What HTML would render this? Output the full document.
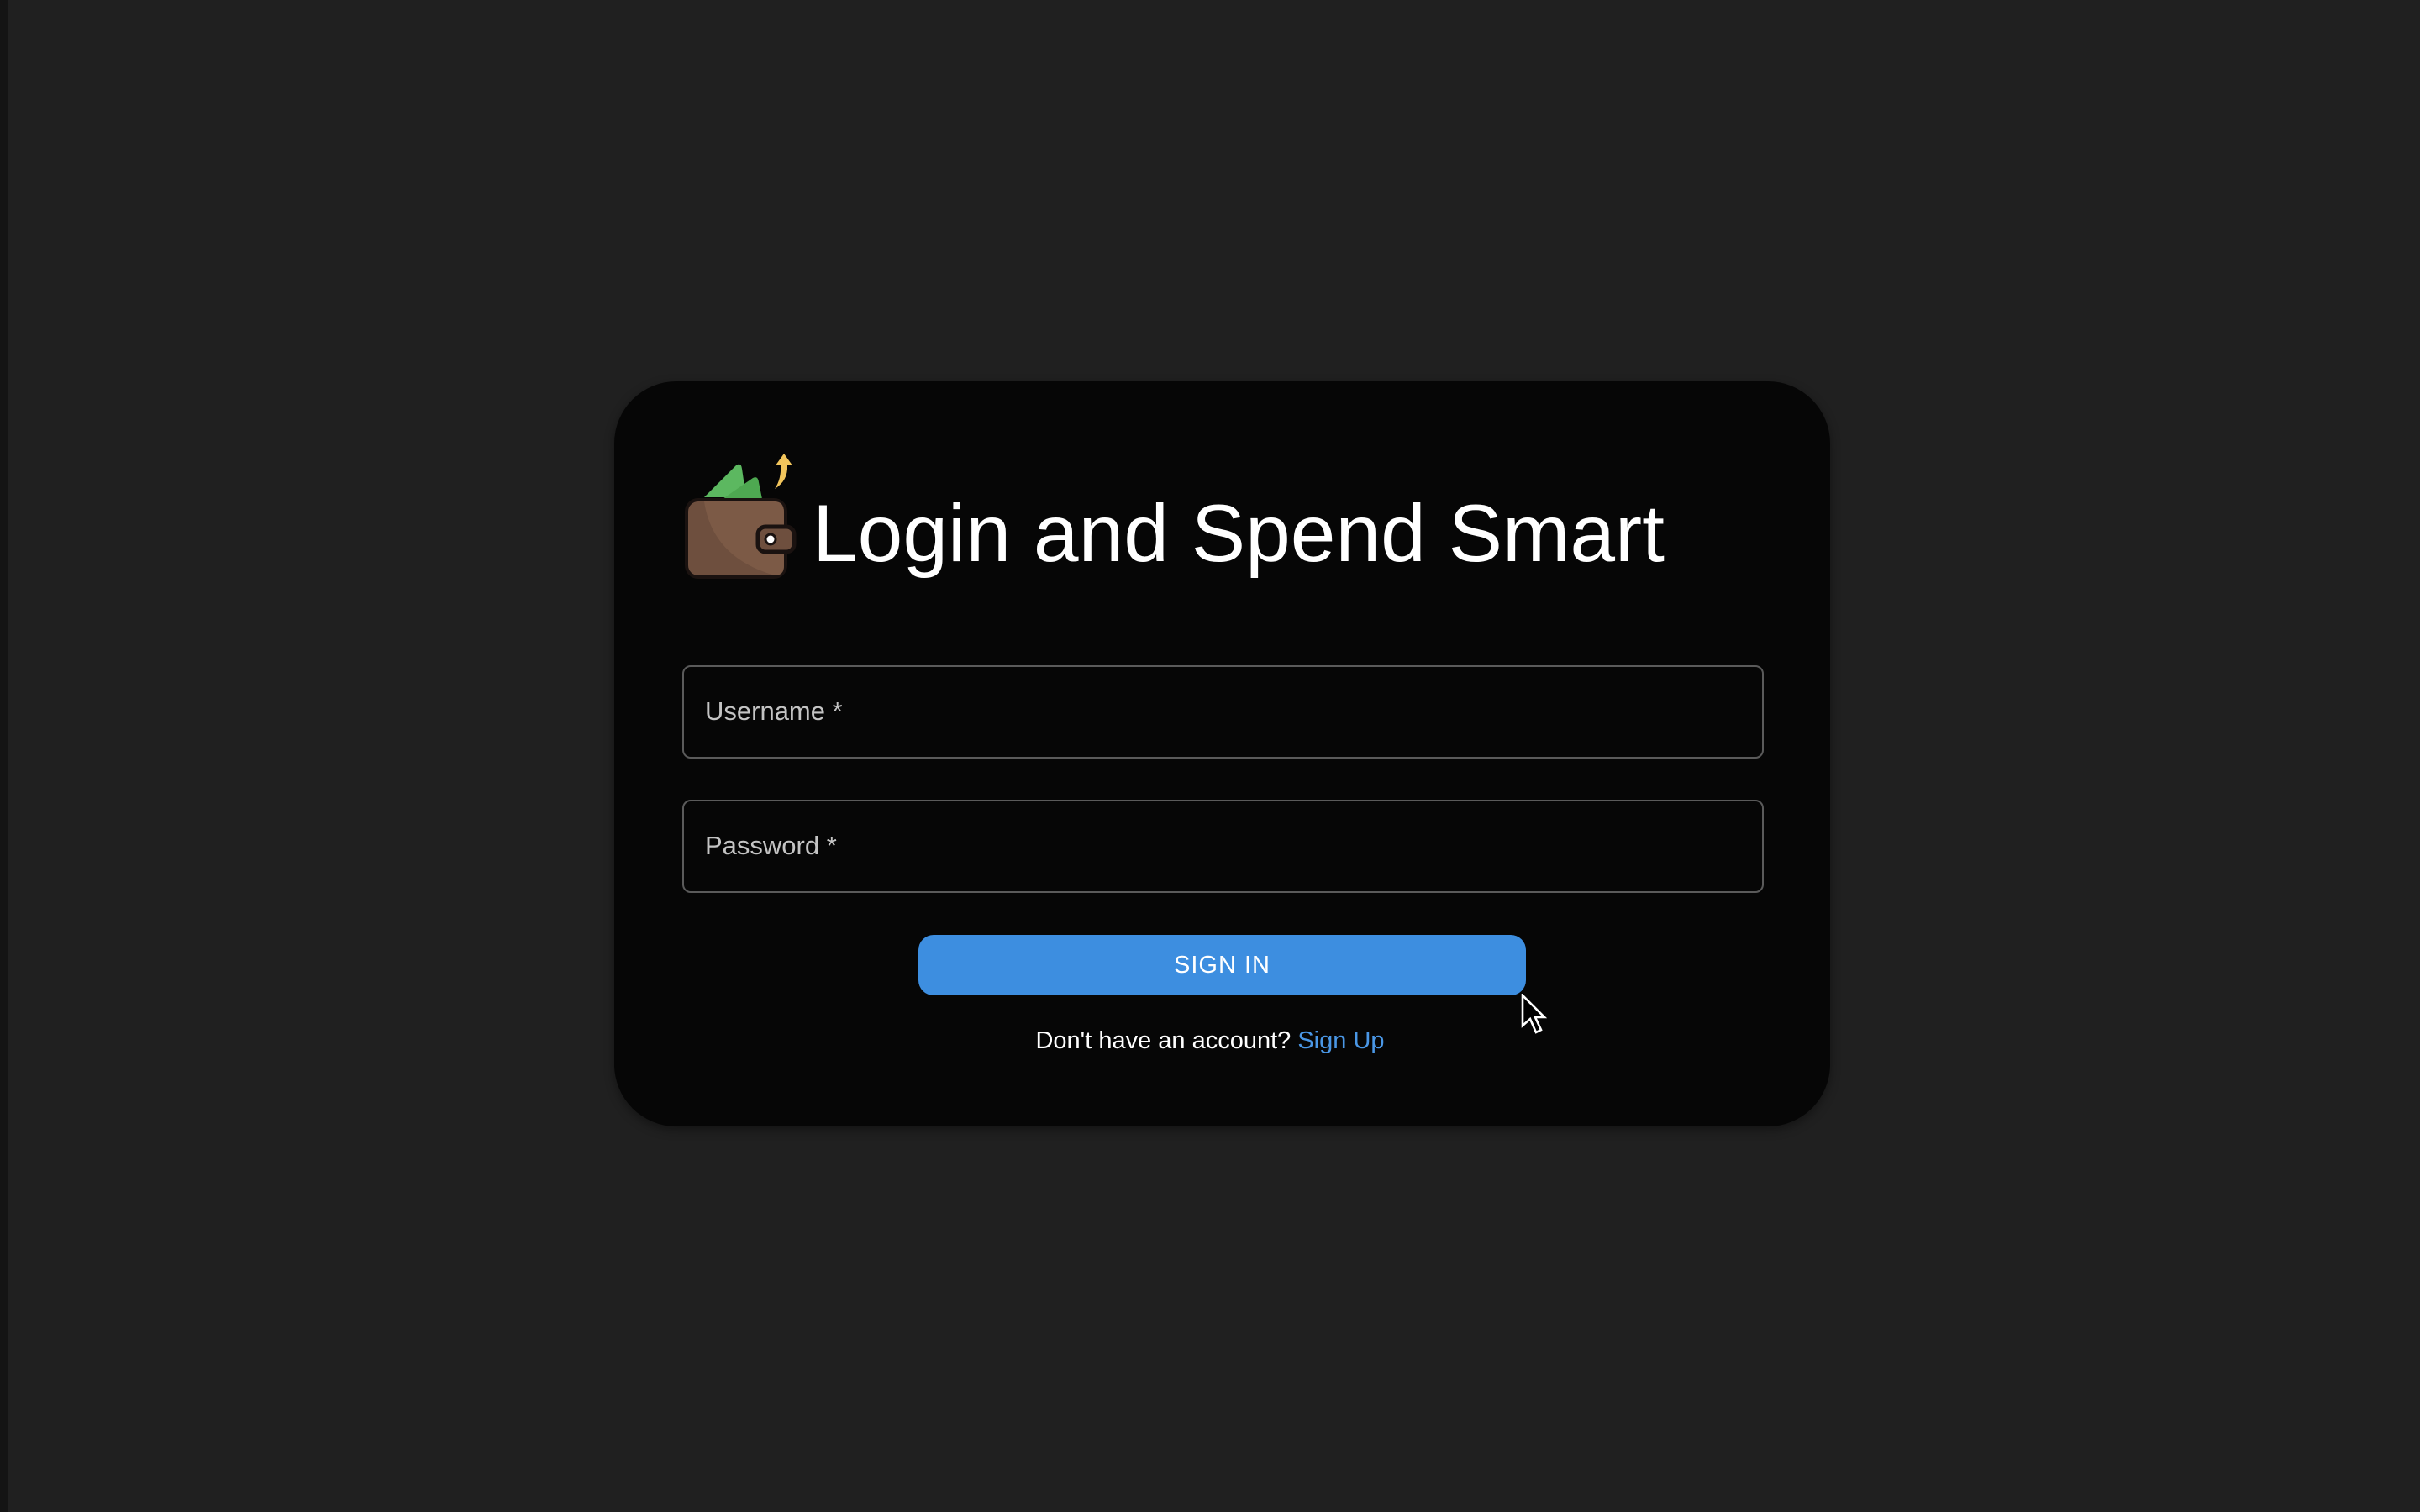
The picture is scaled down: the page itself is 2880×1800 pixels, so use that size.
<!DOCTYPE html>
<html><head><meta charset="utf-8"><style>
html,body{margin:0;padding:0;width:2880px;height:1800px;background:#202020;overflow:hidden;font-family:"Liberation Sans",Arial,sans-serif}
.strip{position:absolute;left:0;top:0;width:9px;height:1800px;background:#141414}
.card{position:absolute;left:731px;top:454px;width:1447px;height:887px;background:#060606;border-radius:74px;box-shadow:0 4px 12px rgba(0,0,0,.4)}
.title{position:absolute;left:967px;top:576px;font-size:96.5px;color:#fff;line-height:120px;white-space:nowrap}
.field{position:absolute;left:812px;width:1283px;height:107px;border:2px solid #5a5a5a;border-radius:10px;box-sizing:content-box}
.field span{position:absolute;left:25px;top:35px;font-size:31px;color:#c4c4c4}
.btn{position:absolute;left:1093px;top:1113px;width:723px;height:72px;background:#3d8ee0;border-radius:18px;color:#fff;font-size:29px;text-align:center;line-height:72px;letter-spacing:1px}
.foot{position:absolute;left:0;width:2880px;top:1223px;text-align:center;font-size:29px;color:#fff}
.foot a{color:#4a97e6;text-decoration:none}
</style></head><body>
<div class="strip"></div>
<div class="card"></div>
<svg style="position:absolute;left:812px;top:536px" width="140" height="156" viewBox="0 0 140 156">
<path d="M26 56 L64 18 Q70 14 71 22 L76 56 Z" fill="#5cb860"/>
<path d="M48 58 L84 33 Q90 30 91 38 L95 58 Z" fill="#4ea851"/>
<path d="M121 4 L111 18 L117 18 Q118 34 110 46 Q126 36 125 18 L131 18 Z" fill="#f2c55c"/>
<rect x="5" y="59" width="118" height="92" rx="14" fill="#6e4f3e" stroke="#1a1210" stroke-width="4"/>
<path d="M26 61 Q36 128 110 149 Q121 149 121 138 L121 74 Q121 61 110 61 Z" fill="#7c5a46"/>
<rect x="90" y="91" width="43" height="30" rx="9" fill="#6e4f3e" stroke="#1a1210" stroke-width="5"/>
<circle cx="105" cy="106" r="6" fill="#fff" stroke="#1a1210" stroke-width="3"/>
</svg>
<div class="title">Login and Spend Smart</div>
<div class="field" style="top:792px"><span>Username *</span></div>
<div class="field" style="top:952px"><span>Password *</span></div>
<div class="btn">SIGN IN</div>
<div class="foot">Don't have an account? <a>Sign Up</a></div>
<svg style="position:absolute;left:1810px;top:1183px" width="34" height="50" viewBox="0 0 17 25">
<path d="M1 1 L1 19 L5.5 15 L9 23 L12 21.5 L8.5 14 L14 14 Z" fill="#000" stroke="#fff" stroke-width="1.3"/>
</svg>
</body></html>
